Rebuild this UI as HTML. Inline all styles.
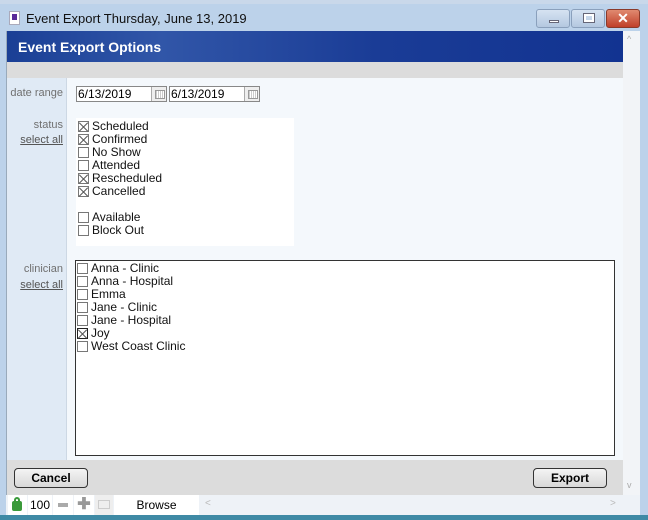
<!DOCTYPE html>
<html><head><style>
*{box-sizing:border-box;margin:0;padding:0}
body{width:648px;height:520px;overflow:hidden;position:relative;background:#bcd2ea;font-family:"Liberation Sans",sans-serif;}
.a{position:absolute}
.lbl{font-size:11px;color:#707070;text-align:right;width:56px;left:7px}
.ul{text-decoration:underline;color:#555}
.cb{position:absolute;width:11px;height:11px;border:1px solid #777;background:#fff}
.cbx::before,.cbx::after{content:"";position:absolute;left:4px;top:-1px;width:1px;height:12px;background:#555;transform:rotate(45deg)}
.cbx::after{transform:rotate(-45deg)}
.t{position:absolute;font-size:12px;color:#111;white-space:nowrap}
.btn{position:absolute;height:20px;border:1px solid #333;border-radius:4px;background:linear-gradient(#f4f4f4,#d8d8d8);font-size:12px;font-weight:bold;text-align:center;line-height:18px}
.date{position:absolute;top:86px;width:91px;height:16px;border:1px solid #888;background:#fff;font-size:12px;line-height:14px;padding-left:1px}
.cal{position:absolute;right:0;top:0;width:15px;height:14px;border-left:1px solid #aaa;background:#eee}
.cal::after{content:"";position:absolute;left:3px;top:3px;width:8px;height:7px;border:1px solid #999;background:repeating-linear-gradient(90deg,#ccc 0 1px,#fff 1px 2px)}
</style></head><body>
<div class="a" style="left:0;top:0;width:648px;height:4px;background:#c9d8ea"></div>
<div class="a" style="left:9px;top:11px;width:11px;height:14px;background:#fff;border:1px solid #aab"></div>
<div class="a" style="left:12px;top:14px;width:5px;height:6px;background:#5a2a9a"></div>
<div class="a" style="left:26px;top:11px;font-size:13px;color:#111">Event Export Thursday, June 13, 2019</div>
<div class="a" style="left:536px;top:9px;width:34px;height:19px;border:1px solid #8aa0bc;border-radius:3px;background:linear-gradient(#d6e3f2,#b4c8e0)"><div class="a" style="left:12px;top:10px;width:10px;height:3px;background:#fff;border:1px solid #667"></div></div>
<div class="a" style="left:571px;top:9px;width:34px;height:19px;border:1px solid #8aa0bc;border-radius:3px;background:linear-gradient(#d6e3f2,#b4c8e0)"><div class="a" style="left:12px;top:4px;width:10px;height:8px;border:2px solid #fff;outline:1px solid #667"></div></div>
<div class="a" style="left:606px;top:9px;width:34px;height:19px;border:1px solid #8a3a2a;border-radius:3px;background:linear-gradient(#e08a70,#c0402a);color:#fff;font-weight:bold;font-size:14px;text-align:center;line-height:17px">✕</div>
<!-- content -->
<div class="a" style="left:6px;top:31px;width:634px;height:484px;background:#f4f8fc;border-left:1px solid #9ab"></div>
<div class="a" style="left:7px;top:31px;width:616px;height:31px;background:linear-gradient(90deg,#1a3f95,#3156a8 25%,#1a3c96 60%,#123391)"></div>
<div class="a" style="left:18px;top:39px;font-size:14px;font-weight:bold;color:#fff">Event Export Options</div>
<div class="a" style="left:623px;top:31px;width:17px;height:464px;background:#f2f4f7"></div>
<div class="a" style="left:627px;top:34px;font-size:9px;color:#aaa">^</div>
<div class="a" style="left:627px;top:480px;font-size:9px;color:#aaa">v</div>
<div class="a" style="left:7px;top:62px;width:616px;height:16px;background:#dcdcdc"></div>
<div class="a" style="left:7px;top:78px;width:60px;height:382px;background:#e0eaf5;border-right:1px solid #cdd8e4"></div>
<div class="a lbl" style="top:87px">date range</div>
<div class="date" style="left:76px">6/13/2019<div class="cal"></div></div>
<div class="date" style="left:169px">6/13/2019<div class="cal"></div></div>
<div class="a lbl" style="top:119px">status</div>
<div class="a lbl ul" style="top:134px">select all</div>
<div class="a" style="left:76px;top:118px;width:218px;height:128px;background:#fff"></div>
<div class="cb cbx" style="left:78px;top:121px"></div><div class="t" style="left:92px;top:119px">Scheduled</div>
<div class="cb cbx" style="left:78px;top:134px"></div><div class="t" style="left:92px;top:132px">Confirmed</div>
<div class="cb" style="left:78px;top:147px"></div><div class="t" style="left:92px;top:145px">No Show</div>
<div class="cb" style="left:78px;top:160px"></div><div class="t" style="left:92px;top:158px">Attended</div>
<div class="cb cbx" style="left:78px;top:173px"></div><div class="t" style="left:92px;top:171px">Rescheduled</div>
<div class="cb cbx" style="left:78px;top:186px"></div><div class="t" style="left:92px;top:184px">Cancelled</div>
<div class="cb" style="left:78px;top:212px"></div><div class="t" style="left:92px;top:210px">Available</div>
<div class="cb" style="left:78px;top:225px"></div><div class="t" style="left:92px;top:223px">Block Out</div>
<div class="a lbl" style="top:263px">clinician</div>
<div class="a lbl ul" style="top:279px">select all</div>
<div class="a" style="left:75px;top:260px;width:540px;height:196px;background:#fff;border:1px solid #333"></div>
<div class="cb" style="left:77px;top:263px"></div><div class="t" style="left:91px;top:261px">Anna - Clinic</div>
<div class="cb" style="left:77px;top:276px"></div><div class="t" style="left:91px;top:274px">Anna - Hospital</div>
<div class="cb" style="left:77px;top:289px"></div><div class="t" style="left:91px;top:287px">Emma</div>
<div class="cb" style="left:77px;top:302px"></div><div class="t" style="left:91px;top:300px">Jane - Clinic</div>
<div class="cb" style="left:77px;top:315px"></div><div class="t" style="left:91px;top:313px">Jane - Hospital</div>
<div class="cb cbx" style="left:77px;top:328px;border-color:#222"></div><div class="t" style="left:91px;top:326px">Joy</div>
<div class="cb" style="left:77px;top:341px"></div><div class="t" style="left:91px;top:339px">West Coast Clinic</div>
<div class="a" style="left:7px;top:460px;width:616px;height:35px;background:#dcdcdc"></div>
<div class="btn" style="left:14px;top:468px;width:74px">Cancel</div>
<div class="btn" style="left:533px;top:468px;width:74px">Export</div>
<!-- status bar -->
<div class="a" style="left:6px;top:495px;width:634px;height:20px;background:#eef2f7"></div>
<div class="a" style="left:8px;top:495px;width:19px;height:20px;background:#fff"><div class="a" style="left:4px;top:6px;width:10px;height:10px;background:#3a9a3a;border-radius:2px"></div><div class="a" style="left:6px;top:2px;width:6px;height:6px;border:2px solid #3a9a3a;border-bottom:none;border-radius:3px 3px 0 0"></div></div>
<div class="a" style="left:28px;top:495px;width:24px;height:20px;background:#fff;font-size:12px;line-height:20px;text-align:center">100</div>
<div class="a" style="left:53px;top:495px;width:20px;height:20px;background:#fff"><div class="a" style="left:5px;top:8px;width:10px;height:4px;background:#aaa"></div></div>
<div class="a" style="left:74px;top:495px;width:20px;height:20px;background:#fff;color:#999;font-weight:bold;font-size:16px;text-align:center;line-height:20px">✚</div>
<div class="a" style="left:95px;top:495px;width:18px;height:20px;background:#eee"><div class="a" style="left:3px;top:5px;width:12px;height:9px;border:1px solid #ccc"></div></div>
<div class="a" style="left:114px;top:495px;width:85px;height:20px;background:#fff;font-size:12px;line-height:20px;text-align:center">Browse</div>
<div class="a" style="left:205px;top:498px;font-size:10px;color:#bbb">&lt;</div>
<div class="a" style="left:610px;top:498px;font-size:10px;color:#bbb">&gt;</div>
<div class="a" style="left:0;top:515px;width:648px;height:5px;background:#3f8aa5"></div>
</body></html>
